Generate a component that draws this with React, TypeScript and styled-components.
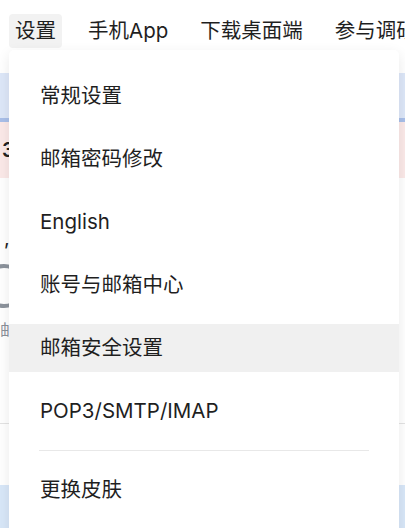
import * as React from 'react';
import styled, { createGlobalStyle } from 'styled-components';

const GlobalStyle = createGlobalStyle`
  html, body {
    margin: 0;
    padding: 0;
    background: #ffffff;
  }
  body {
    font-family: Inter, "Noto Sans CJK SC", sans-serif;
    color: #1f1f1f;
  }
`;

const navItems = ['设置', '手机App', '下载桌面端', '参与调研'];

type MenuEntry = { label: string; active?: boolean; dividerBefore?: boolean };

const menuItems: MenuEntry[] = [
  { label: '常规设置' },
  { label: '邮箱密码修改' },
  { label: 'English' },
  { label: '账号与邮箱中心' },
  { label: '邮箱安全设置', active: true },
  { label: 'POP3/SMTP/IMAP' },
  { label: '更换皮肤', dividerBefore: true },
];

const App: React.FC = () => {
  return (
    <>
      <GlobalStyle />
      <Styled.Page>
        <Styled.Nav>
          {navItems.map((item, i) => (
            <Styled.NavItem key={item} $open={i === 0}>
              {item}
            </Styled.NavItem>
          ))}
        </Styled.Nav>

        <Styled.Content>
          <Styled.Banner />
          <Styled.Notice>3</Styled.Notice>
          <Styled.Body>
            <Styled.Comma>,</Styled.Comma>
            <Styled.Ring />
            <Styled.Hint>邮</Styled.Hint>
          </Styled.Body>
          <Styled.Rule />
          <Styled.Footer />
        </Styled.Content>

        <Styled.Menu>
          {menuItems.map((item) => (
            <React.Fragment key={item.label}>
              {item.dividerBefore && <Styled.Divider />}
              <Styled.MenuItem $active={item.active}>{item.label}</Styled.MenuItem>
            </React.Fragment>
          ))}
        </Styled.Menu>
      </Styled.Page>
    </>
  );
};

const Styled = {
  Page: styled.div`
    position: relative;
    width: 405px;
    height: 528px;
    overflow: hidden;
  `,
  Nav: styled.nav`
    display: flex;
    align-items: center;
    gap: 20px;
    padding: 14px 0 0 9px;
    height: 34px;
    white-space: nowrap;
  `,
  NavItem: styled.div<{ $open?: boolean }>`
    height: 34px;
    line-height: 34px;
    padding: 0 6px;
    font-size: 20.5px;
    border-radius: 4px;
    background: ${(p) => (p.$open ? '#f2f2f2' : 'transparent')};
  `,
  Content: styled.div`
    display: flex;
    flex-direction: column;
    margin-top: 25px;
  `,
  Banner: styled.div`
    height: 45px;
    background: #dde7f8;
    border-bottom: 4px solid #a9bfe9;
  `,
  Notice: styled.div`
    height: 56px;
    background: #fbe9e8;
    font-size: 20px;
    font-weight: 600;
    line-height: 56px;
    padding-left: 2px;
    color: #222;
  `,
  Body: styled.div`
    display: flex;
    flex-direction: column;
    height: 245px;
    padding-left: 4px;
    color: #8a9099;
  `,
  Comma: styled.div`
    margin-top: 50px;
    font-size: 20px;
    color: #222;
    line-height: 20px;
  `,
  Ring: styled.div`
    margin-top: 16px;
    margin-left: -22px;
    width: 36px;
    height: 36px;
    border: 4px solid #8c939c;
    border-radius: 50%;
  `,
  Hint: styled.div`
    margin-top: 12px;
    margin-left: -4px;
    font-size: 16px;
    line-height: 20px;
  `,
  Rule: styled.div`
    height: 1px;
    background: #e3e3e3;
  `,
  Footer: styled.div`
    margin-top: 61px;
    height: 60px;
    background: #d8e7f8;
  `,
  Menu: styled.div`
    position: absolute;
    top: 50px;
    left: 9px;
    width: 390px;
    height: 500px;
    display: flex;
    flex-direction: column;
    gap: 15px;
    padding-top: 22px;
    box-sizing: border-box;
    background: #ffffff;
    border-radius: 5px;
    box-shadow: 0 4px 14px rgba(0, 0, 0, 0.09);
  `,
  MenuItem: styled.div<{ $active?: boolean }>`
    flex: none;
    height: 48px;
    line-height: 48px;
    padding-left: 31px;
    font-size: 20.5px;
    color: #1f1f1f;
    background: ${(p) => (p.$active ? '#f0f0f0' : 'transparent')};
  `,
  Divider: styled.div`
    flex: none;
    height: 1px;
    margin: 0 30px;
    background: #e8e8e8;
  `,
};

export default App;
